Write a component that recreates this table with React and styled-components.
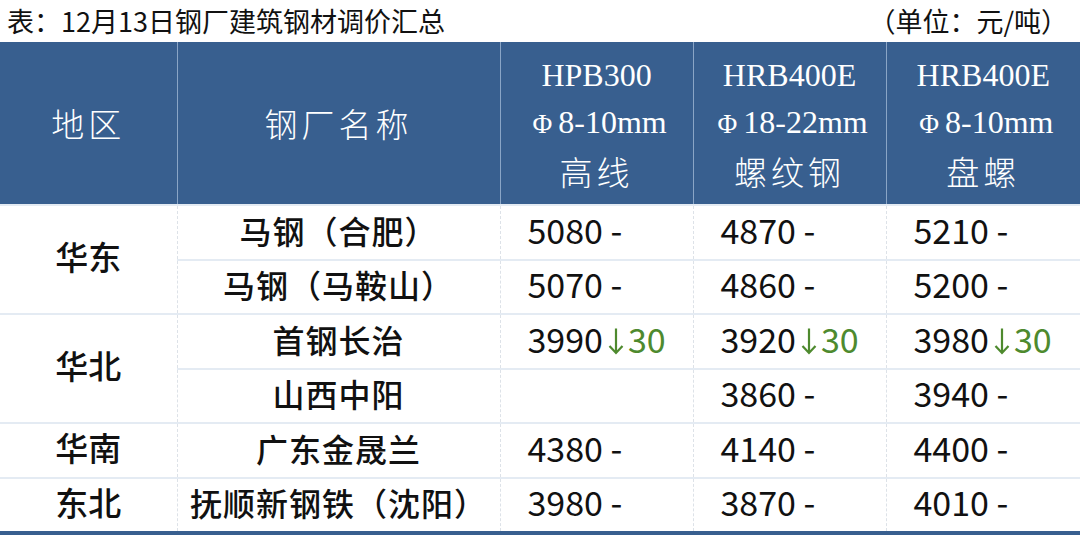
import styled, { createGlobalStyle } from "styled-components";

const GlobalStyle = createGlobalStyle`
  html, body {
    margin: 0;
    padding: 0;
    background: #ffffff;
  }
  body {
    font-family: "Noto Sans CJK SC", "Noto Sans", sans-serif;
    color: #111;
  }
`;

const headerBlue = "#385f8f";
const rowLine = "#e4ebf3";
const dashLine = "#dde2e8";
const dropGreen = "#4e8a2e";

const rows = [
  { region: "华东", span: 2, mill: "马钢（合肥）", prices: [["5080"], ["4870"], ["5210"]] },
  { mill: "马钢（马鞍山）", prices: [["5070"], ["4860"], ["5200"]] },
  { region: "华北", span: 2, mill: "首钢长治", prices: [["3990", "30"], ["3920", "30"], ["3980", "30"]] },
  { mill: "山西中阳", prices: [null, ["3860"], ["3940"]] },
  { region: "华南", span: 1, mill: "广东金晟兰", prices: [["4380"], ["4140"], ["4400"]] },
  { region: "东北", span: 1, mill: "抚顺新钢铁（沈阳）", prices: [["3980"], ["3870"], ["4010"]] },
];

const rowHeights = [55, 54, 55, 54, 55, 55];

const specs = [
  { grade: "HPB300", size: "8-10mm", name: "高线" },
  { grade: "HRB400E", size: "18-22mm", name: "螺纹钢" },
  { grade: "HRB400E", size: "8-10mm", name: "盘螺" },
];

const DownArrow = () => (
  <ArrowIcon viewBox="0 0 22 28" aria-hidden="true">
    <path
      d="M11 1.5V26M4.5 19L11 26l6.5-7"
      fill="none"
      stroke={dropGreen}
      strokeWidth="2.2"
    />
  </ArrowIcon>
);

const Price = ({ value }) => {
  if (!value) return null;
  const [base, drop] = value;
  return (
    <>
      {base}
      {drop ? (
        <Drop>
          <DownArrow />
          {drop}
        </Drop>
      ) : (
        <Dash> -</Dash>
      )}
    </>
  );
};

const App = () => (
  <>
    <GlobalStyle />
    <Page>
      <TitleBar>
        <Title>表：12月13日钢厂建筑钢材调价汇总</Title>
        <Unit>（单位：元/吨）</Unit>
      </TitleBar>
      <Table>
        <colgroup>
          <col style={{ width: 177 }} />
          <col style={{ width: 323 }} />
          <col style={{ width: 193 }} />
          <col style={{ width: 193 }} />
          <col style={{ width: 194 }} />
        </colgroup>
        <thead>
          <tr>
            <HeadCell>地区</HeadCell>
            <HeadCell>钢厂名称</HeadCell>
            {specs.map((s, i) => (
              <HeadCell key={i}>
                <SpecLine $latin>{s.grade}</SpecLine>
                <SpecLine $latin>
                  <Phi>Φ</Phi>
                  {s.size}
                </SpecLine>
                <SpecLine>{s.name}</SpecLine>
              </HeadCell>
            ))}
          </tr>
        </thead>
        <tbody>
          {rows.map((r, i) => (
            <BodyRow key={i} $h={rowHeights[i]}>
              {r.region && (
                <RegionCell rowSpan={r.span}>{r.region}</RegionCell>
              )}
              <MillCell>{r.mill}</MillCell>
              {r.prices.map((p, j) => (
                <PriceCell key={j}>
                  <Price value={p} />
                </PriceCell>
              ))}
            </BodyRow>
          ))}
        </tbody>
      </Table>
    </Page>
  </>
);

export default App;

// Styled Components
const Page = styled.div`
  width: 1080px;
  height: 536px;
  overflow: hidden;
  background: #fff;
`;

const TitleBar = styled.div`
  height: 42px;
  display: flex;
  align-items: center;
  justify-content: space-between;
  padding: 0 12px 2px 7px;
  box-sizing: border-box;
  font-size: 27px;
  color: #111;
`;

const Title = styled.div``;

const Unit = styled.div``;

const Table = styled.table`
  width: 1080px;
  table-layout: fixed;
  border-collapse: collapse;
  border-spacing: 0;
  border-bottom: 4px solid ${headerBlue};
`;

const HeadCell = styled.th`
  height: 162px;
  padding: 0;
  background: ${headerBlue};
  color: #fff;
  font-weight: 300;
  font-size: 33px;
  letter-spacing: 4px;
  text-align: center;
  vertical-align: middle;
  border-left: 1px solid #8aa5c6;
  &:first-child {
    border-left: none;
  }
`;

const SpecLine = styled.div`
  line-height: 47px;
  letter-spacing: ${({ $latin }) => ($latin ? "0" : "4px")};
  font-family: ${({ $latin }) =>
    $latin
      ? `"Liberation Serif", "Noto Sans CJK SC", serif`
      : `"Noto Sans CJK SC", sans-serif`};
  font-weight: ${({ $latin }) => ($latin ? 400 : 300)};
  font-size: ${({ $latin }) => ($latin ? "32px" : "33px")};
  white-space: nowrap;
`;

const Phi = styled.span`
  display: inline-block;
  width: 32px;
  font-size: 27px;
  text-align: center;
`;

const BodyRow = styled.tr`
  height: ${({ $h }) => $h}px;
`;

const BodyCell = styled.td`
  padding: 0 0 6px;
  font-size: 34px;
  font-weight: 500;
  line-height: 1;
  vertical-align: middle;
  white-space: nowrap;
  border-left: 1px dashed ${dashLine};
  border-top: 2px solid ${rowLine};
`;

const RegionCell = styled(BodyCell)`
  text-align: center;
  border-left: none;
  font-size: 33px;
`;

const MillCell = styled(BodyCell)`
  text-align: center;
  font-size: 32px;
  letter-spacing: 1px;
`;

const PriceCell = styled(BodyCell)`
  text-align: left;
  padding-left: 27px;
  font-weight: 400;
`;

const Dash = styled.span`
  white-space: pre;
`;

const Drop = styled.span`
  color: ${dropGreen};
`;

const ArrowIcon = styled.svg`
  display: inline-block;
  width: 22px;
  height: 28px;
  margin: 0 1px 0 2px;
  vertical-align: -2px;
`;
